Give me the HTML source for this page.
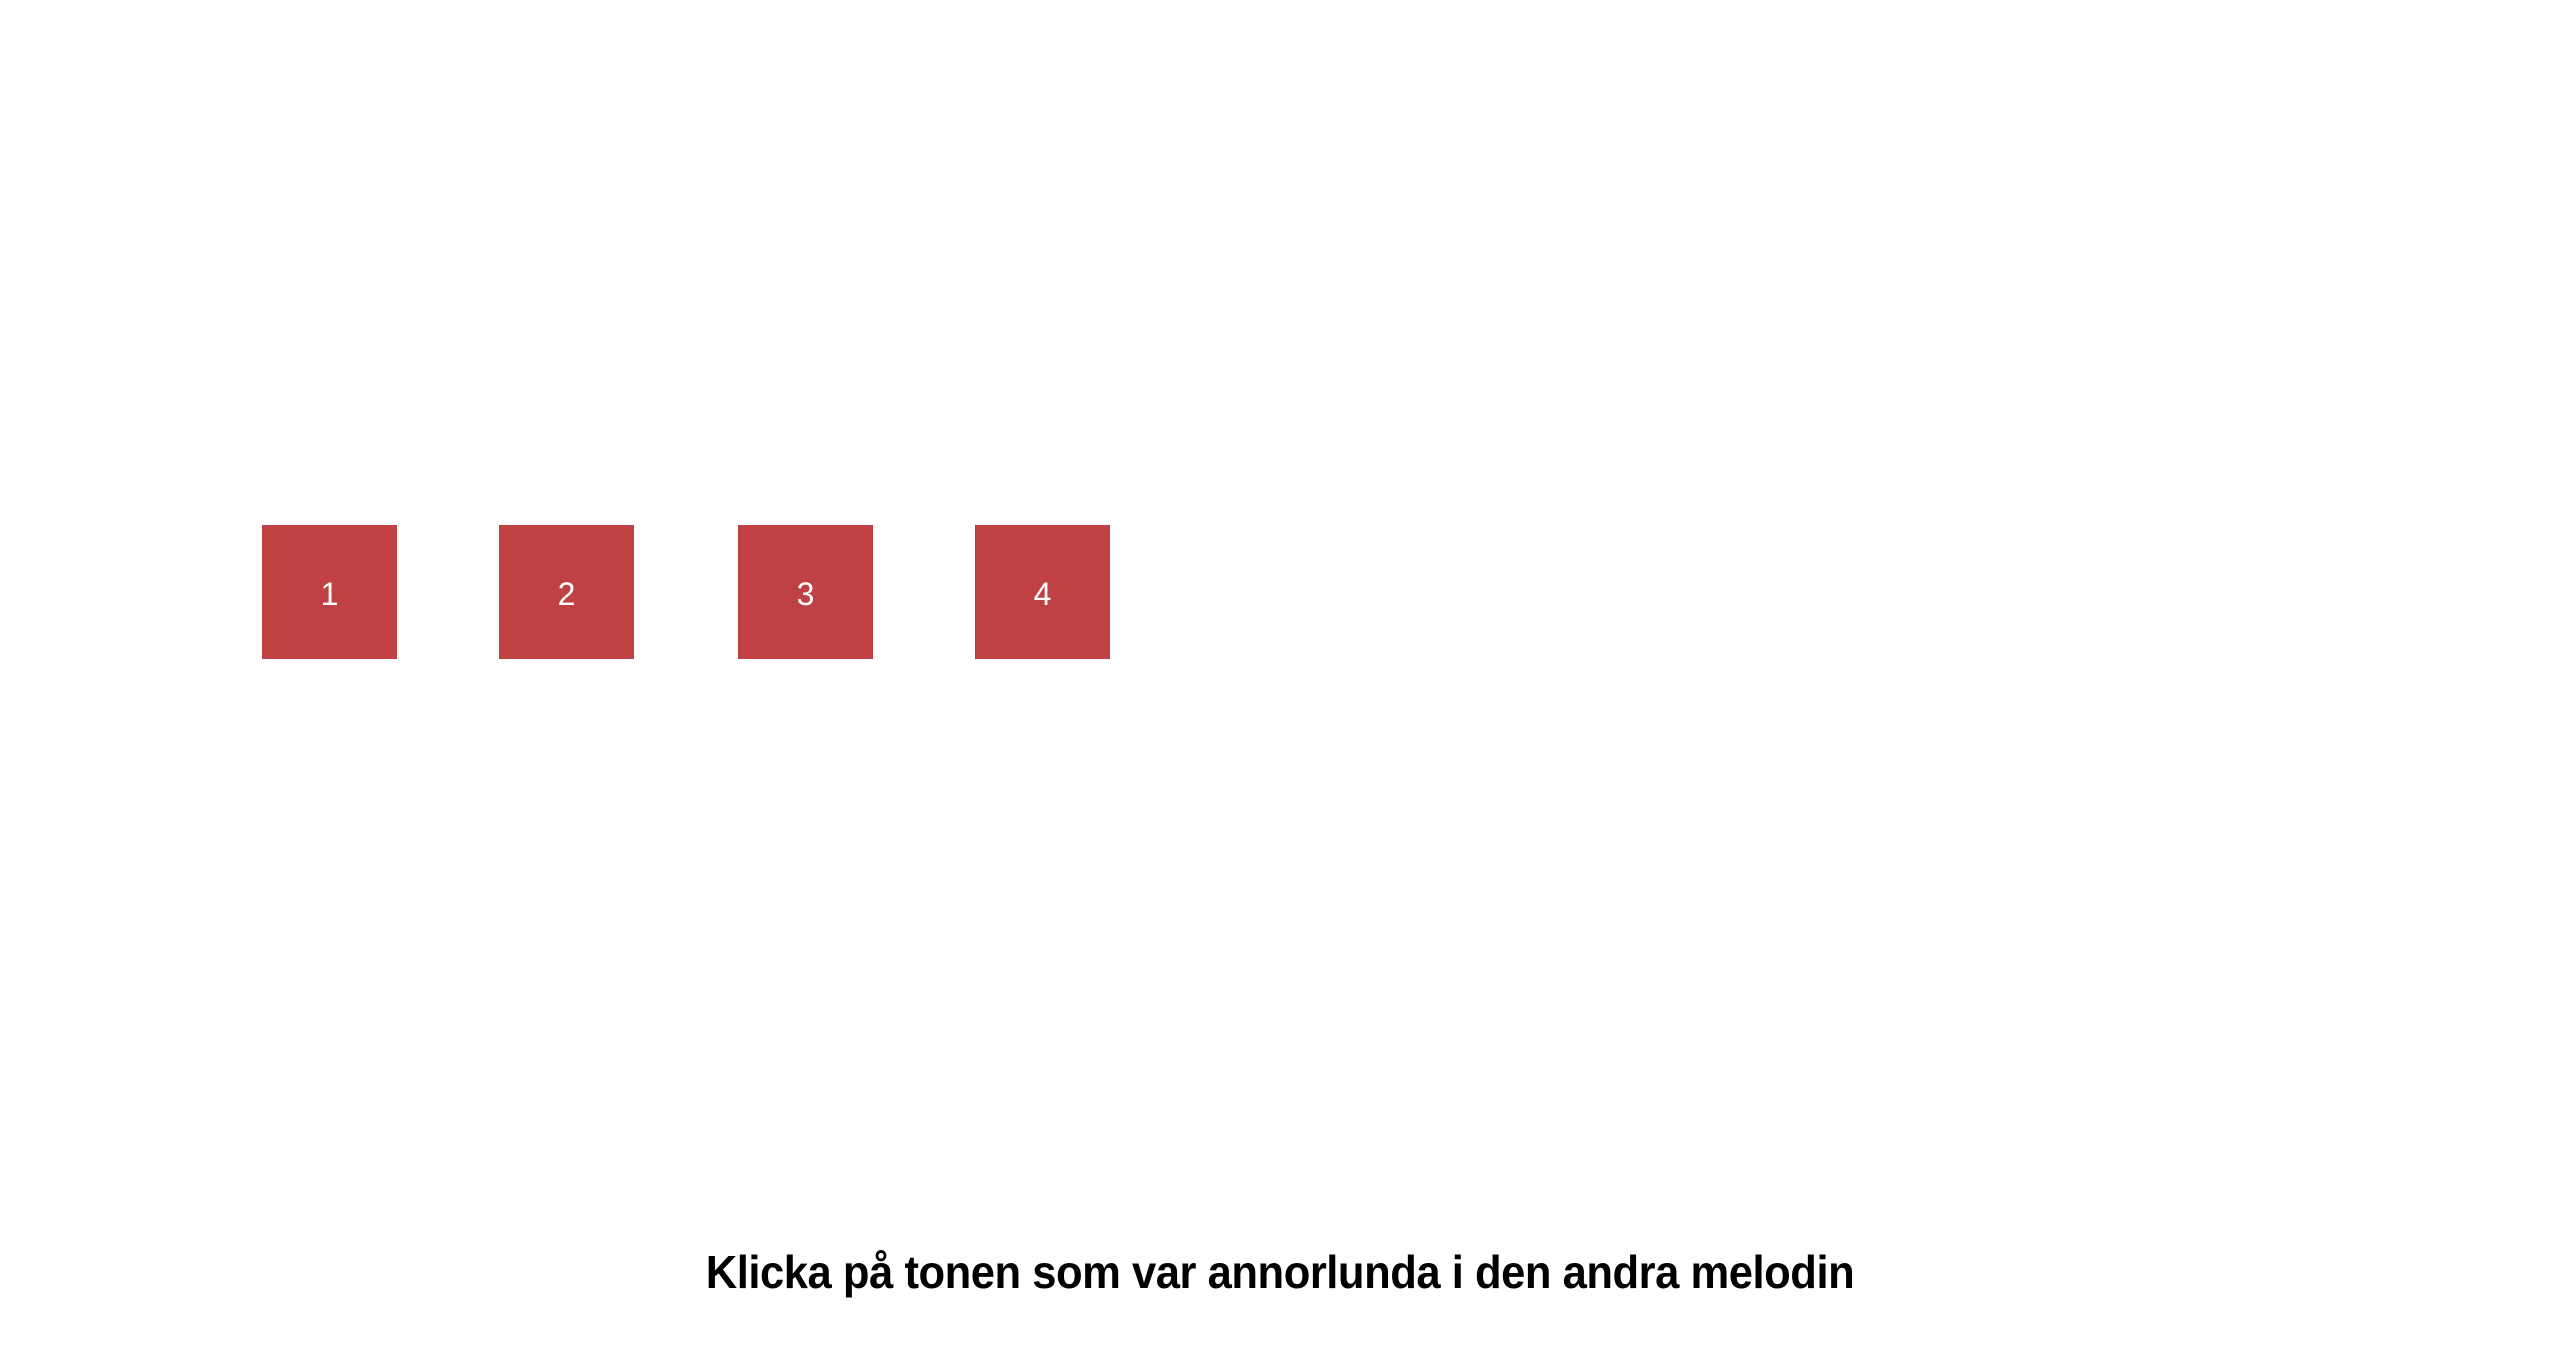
<!DOCTYPE html>
<html><head><meta charset="utf-8"><style>
html,body{margin:0;padding:0;background:#fff;width:2560px;height:1358px;overflow:hidden;font-family:"Liberation Sans",Arial,sans-serif}
.b{position:absolute;top:525px;width:135px;height:134px;background:#bf4143;color:#fff;font-size:32px;display:flex;align-items:center;justify-content:center;padding-top:4px;box-sizing:border-box}
.t{position:absolute;left:0;width:2560px;text-align:center;top:1245px;font-size:46px;font-weight:bold;color:#000;letter-spacing:-0.5px;transform:scaleX(0.947);transform-origin:1280px 0}
</style></head><body>
<div class="b" style="left:262px">1</div>
<div class="b" style="left:499px">2</div>
<div class="b" style="left:738px">3</div>
<div class="b" style="left:975px">4</div>
<div class="t">Klicka på tonen som var annorlunda i den andra melodin</div>
</body></html>
